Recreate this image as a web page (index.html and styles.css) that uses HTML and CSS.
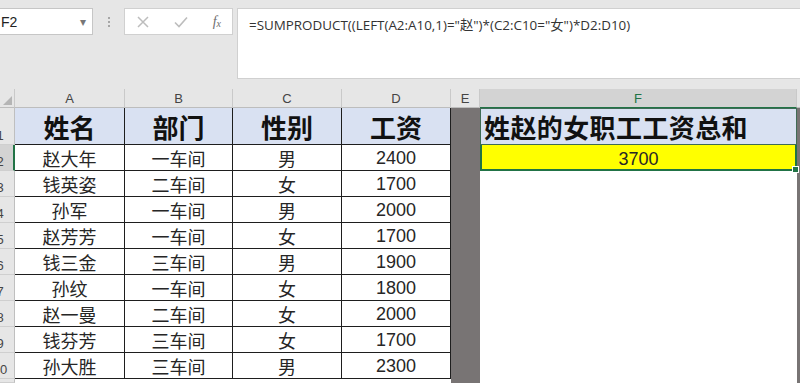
FILE: index.html
```html
<!DOCTYPE html>
<html lang="zh-CN">
<head>
    <meta charset="UTF-8">
    <meta name="viewport" content="width=device-width, initial-scale=1.0">
    <title>姓赵的女职工工资总和</title>
    <link rel="stylesheet" href="styles.css">
</head>
<body>
    <div class="formula-area">
        <div class="name-box">
            <span>F2</span>
            <span class="drop">&#9662;</span>
        </div>
        <div class="grip">
            <i></i><i></i><i></i>
        </div>
        <div class="fx-buttons">
            <svg width="12" height="12" viewBox="0 0 12 12"><path d="M1 1 L11 11 M11 1 L1 11" stroke="#bdbdbd" stroke-width="1.5" fill="none"/></svg>
            <svg width="14" height="12" viewBox="0 0 14 12"><path d="M1 6.5 L5 10.5 L13 1.5" stroke="#bdbdbd" stroke-width="1.6" fill="none"/></svg>
            <span class="fx">f<sub>x</sub></span>
        </div>
        <div class="formula-input">=SUMPRODUCT((LEFT(A2:A10,1)="赵")*(C2:C10="女")*D2:D10)</div>
    </div>

    <div class="sheet">
        <!-- 列标题 -->
        <div class="corner"></div>
        <div class="col-head">A</div>
        <div class="col-head">B</div>
        <div class="col-head">C</div>
        <div class="col-head">D</div>
        <div class="col-head">E</div>
        <div class="col-head active">F</div>
        <div class="col-head last"></div>

        <!-- 第1行 -->
        <div class="row-head"><span>1</span></div>
        <div class="cell title">姓名</div>
        <div class="cell title">部门</div>
        <div class="cell title">性别</div>
        <div class="cell title">工资</div>
        <div class="col-e"></div>
        <div class="cell title result-title">姓赵的女职工工资总和</div>
        <div class="col-g"></div>

        <div class="row-head active"><span>2</span></div>
        <div class="cell">赵大年</div><div class="cell">一车间</div><div class="cell">男</div><div class="cell num">2400</div>
        <div class="cell result">3700<i class="handle"></i></div>

        <div class="row-head"><span>3</span></div>
        <div class="cell">钱英姿</div><div class="cell">二车间</div><div class="cell">女</div><div class="cell num">1700</div>
        <div class="col-f"></div>

        <div class="row-head"><span>4</span></div>
        <div class="cell">孙军</div><div class="cell">一车间</div><div class="cell">男</div><div class="cell num">2000</div>

        <div class="row-head"><span>5</span></div>
        <div class="cell">赵芳芳</div><div class="cell">一车间</div><div class="cell">女</div><div class="cell num">1700</div>

        <div class="row-head"><span>6</span></div>
        <div class="cell">钱三金</div><div class="cell">三车间</div><div class="cell">男</div><div class="cell num">1900</div>

        <div class="row-head"><span>7</span></div>
        <div class="cell">孙纹</div><div class="cell">一车间</div><div class="cell">女</div><div class="cell num">1800</div>

        <div class="row-head"><span>8</span></div>
        <div class="cell">赵一曼</div><div class="cell">二车间</div><div class="cell">女</div><div class="cell num">2000</div>

        <div class="row-head"><span>9</span></div>
        <div class="cell">钱芬芳</div><div class="cell">三车间</div><div class="cell">女</div><div class="cell num">1700</div>

        <div class="row-head"><span>10</span></div>
        <div class="cell">孙大胜</div><div class="cell">三车间</div><div class="cell">男</div><div class="cell num">2300</div>

        <div class="row-head"></div>
    </div>
</body>
</html>
```

FILE: styles.css
```css
body {
    margin: 0;
    padding: 0;
    width: 800px;
    height: 383px;
    overflow: hidden;
    background-color: #e6e6e6;
    font-family: "Liberation Sans", "Noto Sans CJK SC", sans-serif;
    color: #222;
}
.formula-area {
    height: 89px;
    display: flex;
    align-items: flex-start;
    padding-top: 8px;
    box-sizing: border-box;
}
.formula-area > div {
    flex-shrink: 0;
}
.name-box {
    margin-left: -20px;
    width: 113px;
    height: 27px;
    box-sizing: border-box;
    background-color: #fff;
    border: 1px solid #c6c6c6;
    display: flex;
    align-items: center;
    justify-content: space-between;
    padding: 0 6px 0 20px;
    font-size: 14px;
    color: #222;
}
.name-box .drop {
    font-size: 12px;
    color: #777;
}
.grip {
    width: 31px;
    height: 27px;
    display: flex;
    flex-direction: column;
    align-items: center;
    justify-content: center;
    gap: 2px;
}
.grip i {
    width: 2px;
    height: 2px;
    background-color: #a6a6a6;
}
.fx-buttons {
    width: 109px;
    height: 27px;
    box-sizing: border-box;
    background-color: #fff;
    border: 1px solid #d0d0d0;
    display: flex;
    align-items: center;
    justify-content: space-between;
    padding: 0 11px 0 12px;
}
.fx {
    font-family: "Liberation Serif", serif;
    font-style: italic;
    font-size: 14px;
    color: #6e6e6e;
}
.fx sub {
    font-size: 10px;
    vertical-align: -1px;
}
.formula-input {
    margin-left: 4px;
    width: 600px;
    height: 71px;
    box-sizing: border-box;
    background-color: #fff;
    border: 1px solid #d0d0d0;
    padding: 5px 0 0 11px;
    font-family: "Open Sans", "Noto Sans CJK SC", sans-serif;
    font-size: 13.4px;
    color: #333;
}

.sheet {
    display: grid;
    grid-template-columns: 15px 110px 108px 109px 109px 29px 317px 1fr;
    grid-template-rows: 19px 37px repeat(9, 26px) 1fr;
    height: 294px;
    background-color: #fff;
}
.corner, .col-head {
    background-color: #e6e6e6;
    border-right: 1px solid #c9c9c9;
    border-bottom: 1px solid #bdbdbd;
    box-sizing: border-box;
}
.corner {
    display: flex;
    align-items: flex-end;
    justify-content: flex-end;
    padding: 0 2px 2px 0;
}
.corner::after {
    content: '';
    width: 0;
    height: 0;
    border-left: 9px solid transparent;
    border-bottom: 9px solid #b5b5b5;
}
.col-head {
    display: flex;
    align-items: center;
    justify-content: center;
    font-size: 13px;
    color: #444;
}
.col-head.active {
    background-color: #d3d3d3;
    color: #217346;
    border-bottom: 1px solid #217346;
}
.col-head.last {
    border-right: none;
}
.row-head {
    grid-column: 1;
    background-color: #e6e6e6;
    border-right: 1px solid #bfbfbf;
    border-bottom: 1px solid #cfcfcf;
    box-sizing: border-box;
    overflow: hidden;
    display: flex;
    align-items: flex-end;
    font-size: 13px;
    color: #444;
}
.row-head span {
    margin-left: -15px;
    width: 30px;
    flex-shrink: 0;
    text-align: center;
    padding-bottom: 1px;
}
.row-head.active {
    background-color: #d3d3d3;
    border-right: 2px solid #217346;
}
.cell {
    border-right: 1px solid #1e1e1e;
    border-bottom: 1px solid #1e1e1e;
    box-sizing: border-box;
    display: flex;
    align-items: center;
    justify-content: center;
    font-size: 18px;
    color: #262626;
}
.num {
    padding-top: 1px;
}
.title {
    background-color: #d9e1f2;
    font-size: 26px;
    font-weight: bold;
    color: #111;
}
.result-title {
    justify-content: flex-start;
    padding-left: 3px;
    border: 1px solid #3f6b55;
    letter-spacing: 0.4px;
}
.col-e {
    grid-column: 6;
    grid-row: 2 / -1;
    background-color: #787474;
}
.col-g {
    grid-column: 8;
    grid-row: 2 / -1;
    background-color: #787474;
}
.result {
    grid-column: 7;
    background-color: #ffff00;
    border: 2px solid #217346;
    border-top: none;
    position: relative;
    padding-top: 4px;
}
.handle {
    position: absolute;
    right: -4px;
    bottom: -4px;
    width: 5px;
    height: 5px;
    background-color: #217346;
    border: 1px solid #fff;
}
.col-f {
    grid-column: 7;
    grid-row: 4 / -1;
    background-color: #fff;
}
```
